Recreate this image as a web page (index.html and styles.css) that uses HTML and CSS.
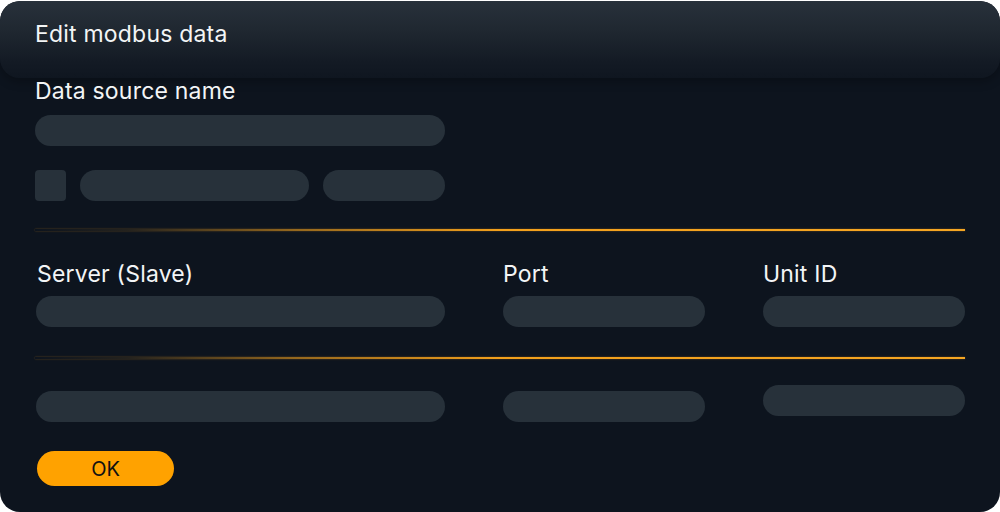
FILE: index.html
```html
<!DOCTYPE html>
<html lang="en">
<head>
<meta charset="utf-8">
<title>Edit modbus data</title>
<link rel="stylesheet" href="styles.css">
</head>
<body>
<div class="card">
  <div class="header">
    <h1 class="title">Edit modbus data</h1>
  </div>
  <div class="content">
    <div class="label first">Data source name</div>
    <div class="field wide"></div>
    <div class="row2">
      <div class="check"></div>
      <div class="field f229"></div>
      <div class="field f122"></div>
    </div>
    <div class="divider d1"></div>
    <div class="grid labels">
      <div class="label">Server (Slave)</div>
      <div class="label">Port</div>
      <div class="label">Unit ID</div>
    </div>
    <div class="grid fields1">
      <div class="field"></div>
      <div class="field"></div>
      <div class="field"></div>
    </div>
    <div class="divider d2"></div>
    <div class="grid fields2">
      <div class="field"></div>
      <div class="field"></div>
      <div class="field raised"></div>
    </div>
    <button class="ok">OK</button>
  </div>
</div>
</body>
</html>
```

FILE: styles.css
```css
html, body {
  margin: 0;
  padding: 0;
  background: #ffffff;
}
body {
  font-family: Inter, "Liberation Sans", sans-serif;
  color: #f3f5f6;
}
.card {
  margin-top: 1px;
  width: 1000px;
  height: 511px;
  box-sizing: border-box;
  background: #0d141e;
  border-radius: 20px;
  overflow: hidden;
}
.header {
  height: 77px;
  box-sizing: border-box;
  padding: 20px 35px 0;
  border-radius: 20px;
  background: linear-gradient(180deg, #28313b 0%, #1f2730 40%, #131a24 80%, #0f1620 100%);
  box-shadow: 0 4px 10px rgba(0, 0, 0, 0.25);
}
.title {
  margin: 0;
  font-size: 23px;
  line-height: 26px;
  font-weight: 400;
  letter-spacing: 0.2px;
}
.content {
  padding: 0 35px;
}
.label {
  font-size: 23px;
  line-height: 26px;
  letter-spacing: 0.2px;
}
.field {
  height: 31px;
  border-radius: 16px;
  background: #27313a;
}
.field.wide {
  width: 410px;
  margin-top: 11px;
}
.row2 {
  display: flex;
  gap: 14px;
  margin-top: 24px;
}
.check {
  width: 31px;
  height: 31px;
  border-radius: 4px;
  background: #27313a;
}
.f229 { width: 229px; }
.f122 { width: 122px; }
.divider {
  height: 2px;
  background: linear-gradient(90deg, rgba(240, 160, 30, 0) 0%, rgba(240, 160, 30, 0.1) 10%, rgba(240, 160, 30, 0.6) 28%, #f2a01c 50%, #f5a623 100%);
  box-shadow: 0 0 2px rgba(245, 160, 30, 0.4);
}
.d1 { margin-top: 28px; }
.d2 { margin-top: 30px; }
.grid {
  display: grid;
  grid-template-columns: 410px 202px 202px;
  column-gap: 58px;
}
.labels {
  margin-top: 30px;
}
.labels .label:first-child { padding-left: 2px; }
.fields1 {
  margin-top: 9px;
}
.fields1 .field:first-child,
.fields2 .field:first-child {
  margin-left: 1px;
}
.fields2 {
  margin-top: 32px;
  align-items: start;
}
.field.raised {
  margin-top: -6px;
}
.ok {
  display: block;
  margin: 29px 0 0 2px;
  width: 137px;
  height: 35px;
  border: none;
  border-radius: 18px;
  background: #ffa200;
  color: #111111;
  font-family: Inter, "Liberation Sans", sans-serif;
  font-size: 20px;
  padding: 0;
}
```
